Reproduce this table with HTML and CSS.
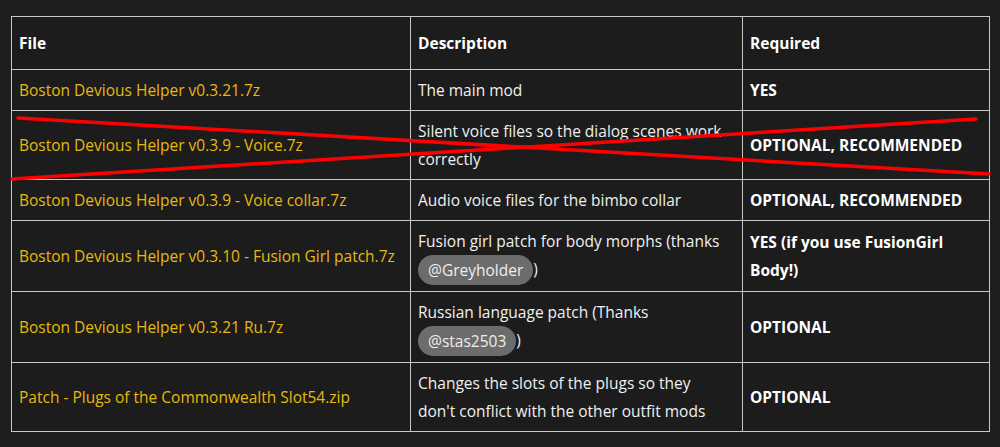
FILE: index.html
```html
<!DOCTYPE html>
<html lang="en">
<head>
    <meta charset="UTF-8">
    <title>Boston Devious Helper - Files</title>
    <link rel="stylesheet" href="styles.css">
</head>
<body>
    <table class="files">
        <colgroup>
            <col class="col-file">
            <col class="col-desc">
            <col class="col-req">
        </colgroup>
        <thead>
            <tr>
                <th>File</th>
                <th>Description</th>
                <th>Required</th>
            </tr>
        </thead>
        <tbody>
            <tr>
                <td><a href="#">Boston Devious Helper v0.3.21.7z</a></td>
                <td>The main mod</td>
                <td class="req">YES</td>
            </tr>
            <tr class="struck">
                <td class="strike-cell">
                    <a href="#">Boston Devious Helper v0.3.9 - Voice.7z</a>
                    <!-- red cross drawn over the whole row -->
                    <svg class="strike" width="977" height="64" viewBox="0 0 977 64">
                        <line x1="6" y1="2" x2="977" y2="58" stroke="#ff0000" stroke-width="3.5" stroke-linecap="round"/>
                        <line x1="0" y1="63" x2="964" y2="3" stroke="#ff0000" stroke-width="3.5" stroke-linecap="round"/>
                    </svg>
                </td>
                <td>Silent voice files so the dialog scenes work correctly</td>
                <td class="req">OPTIONAL, RECOMMENDED</td>
            </tr>
            <tr>
                <td><a href="#">Boston Devious Helper v0.3.9 - Voice collar.7z</a></td>
                <td>Audio voice files for the bimbo collar</td>
                <td class="req">OPTIONAL, RECOMMENDED</td>
            </tr>
            <tr>
                <td><a href="#">Boston Devious Helper v0.3.10 - Fusion Girl patch.7z</a></td>
                <td>Fusion girl patch for body morphs (thanks <span class="mention">@Greyholder</span>)</td>
                <td class="req">YES (if you use FusionGirl Body!)</td>
            </tr>
            <tr>
                <td><a href="#">Boston Devious Helper v0.3.21 Ru.7z</a></td>
                <td>Russian language patch (Thanks <span class="mention">@stas2503</span>)</td>
                <td class="req">OPTIONAL</td>
            </tr>
            <tr>
                <td><a href="#">Patch - Plugs of the Commonwealth Slot54.zip</a></td>
                <td>Changes the slots of the plugs so they don't&nbsp;conflict with the other outfit mods</td>
                <td class="req">OPTIONAL</td>
            </tr>
        </tbody>
    </table>
</body>
</html>
```

FILE: styles.css
```css
body {
    margin: 0;
    padding: 16px 11px;
    background-color: #1e1e1e;
    color: #f0f0f0;
    font-family: 'Open Sans', 'Noto Sans', sans-serif;
    font-size: 15.5px;
    line-height: 28px;
}
.files {
    width: 978px;
    border-collapse: collapse;
    table-layout: fixed;
    background-color: #1c1c1c;
}
.col-file {
    width: 399px;
}
.col-desc {
    width: 332px;
}
.col-req {
    width: 247px;
}
th, td {
    border: 1px solid #c8c8c8;
    padding: 6px 7px;
    text-align: left;
    vertical-align: middle;
}
th {
    padding: 12px 7px;
    font-weight: bold;
    color: #fff;
}
a {
    color: #e6b90e;
    text-decoration: none;
}
.req {
    font-weight: bold;
    color: #fff;
}
.mention {
    display: inline-block;
    background-color: #6c6c6c;
    color: #eee;
    border-radius: 15px;
    padding: 0 10px;
    line-height: 30px;
    vertical-align: middle;
    margin-top: -2px;
}
.strike-cell {
    position: relative;
}
.strike {
    position: absolute;
    left: 0;
    top: 5px;
    pointer-events: none;
    overflow: visible;
}
```
